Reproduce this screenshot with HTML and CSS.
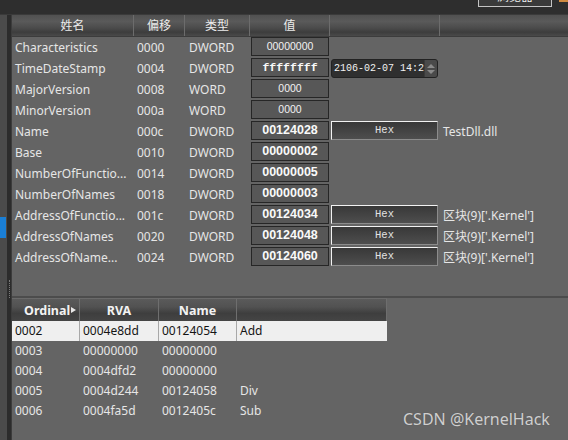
FILE: index.html
```html
<!DOCTYPE html>
<html>
<head>
<meta charset="utf-8">
<link rel="stylesheet" href="styles.css">
</head>
<body>
<div class="app">
  <div class="topbar">
    <div class="tb-btn">浏览器</div>
    <div class="tb-orange"></div>
  </div>
  <div class="main">
    <div class="sidebar">
      <div class="side-light"><div class="side-blue"></div></div>
      <div class="side-dark"><div class="side-grip"></div></div>
    </div>
    <div class="content">
      <div class="upper">
        <div class="urow uhead">
          <div class="hc">姓名</div>
          <div class="hc">偏移</div>
          <div class="hc">类型</div>
          <div class="hc">值</div>
          <div class="hc"></div>
          <div class="hc last"></div>
        </div>
        <div class="urow">
          <div class="c">Characteristics</div><div class="c">0000</div><div class="c">DWORD</div>
          <div class="c"><div class="vbox thin">00000000</div></div><div class="c"></div><div class="c"></div>
        </div>
        <div class="urow">
          <div class="c">TimeDateStamp</div><div class="c">0004</div><div class="c">DWORD</div>
          <div class="c"><div class="vbox mono">ffffffff</div></div>
          <div class="c"><div class="datebox"><span class="date-text">2106-02-07 14:2</span><span class="spin"><i class="up"></i><i class="dn"></i></span></div></div>
          <div class="c"></div>
        </div>
        <div class="urow">
          <div class="c">MajorVersion</div><div class="c">0008</div><div class="c">WORD</div>
          <div class="c"><div class="vbox thin">0000</div></div><div class="c"></div><div class="c"></div>
        </div>
        <div class="urow">
          <div class="c">MinorVersion</div><div class="c">000a</div><div class="c">WORD</div>
          <div class="c"><div class="vbox thin">0000</div></div><div class="c"></div><div class="c"></div>
        </div>
        <div class="urow">
          <div class="c">Name</div><div class="c">000c</div><div class="c">DWORD</div>
          <div class="c"><div class="vbox bold">00124028</div></div>
          <div class="c"><div class="hexbtn">Hex</div></div>
          <div class="c">TestDll.dll</div>
        </div>
        <div class="urow">
          <div class="c">Base</div><div class="c">0010</div><div class="c">DWORD</div>
          <div class="c"><div class="vbox bold">00000002</div></div><div class="c"></div><div class="c"></div>
        </div>
        <div class="urow">
          <div class="c">NumberOfFunctio...</div><div class="c">0014</div><div class="c">DWORD</div>
          <div class="c"><div class="vbox bold">00000005</div></div><div class="c"></div><div class="c"></div>
        </div>
        <div class="urow">
          <div class="c">NumberOfNames</div><div class="c">0018</div><div class="c">DWORD</div>
          <div class="c"><div class="vbox bold">00000003</div></div><div class="c"></div><div class="c"></div>
        </div>
        <div class="urow">
          <div class="c">AddressOfFunctio...</div><div class="c">001c</div><div class="c">DWORD</div>
          <div class="c"><div class="vbox bold">00124034</div></div>
          <div class="c"><div class="hexbtn">Hex</div></div>
          <div class="c">区块(9)['.Kernel']</div>
        </div>
        <div class="urow">
          <div class="c">AddressOfNames</div><div class="c">0020</div><div class="c">DWORD</div>
          <div class="c"><div class="vbox bold">00124048</div></div>
          <div class="c"><div class="hexbtn">Hex</div></div>
          <div class="c">区块(9)['.Kernel']</div>
        </div>
        <div class="urow">
          <div class="c">AddressOfName...</div><div class="c">0024</div><div class="c">DWORD</div>
          <div class="c"><div class="vbox bold">00124060</div></div>
          <div class="c"><div class="hexbtn">Hex</div></div>
          <div class="c">区块(9)['.Kernel']</div>
        </div>
      </div>
      <div class="splitter"></div>
      <div class="lower">
        <div class="lrow lhead">
          <div class="lh"><span>Ordinal</span><i class="sort"></i></div>
          <div class="lh">RVA</div>
          <div class="lh">Name</div>
          <div class="lh"></div>
        </div>
        <div class="lrow sel">
          <div class="lc">0002</div><div class="lc">0004e8dd</div><div class="lc">00124054</div><div class="lc">Add</div>
        </div>
        <div class="lrow">
          <div class="lc">0003</div><div class="lc">00000000</div><div class="lc">00000000</div><div class="lc"></div>
        </div>
        <div class="lrow">
          <div class="lc">0004</div><div class="lc">0004dfd2</div><div class="lc">00000000</div><div class="lc"></div>
        </div>
        <div class="lrow">
          <div class="lc">0005</div><div class="lc">0004d244</div><div class="lc">00124058</div><div class="lc">Div</div>
        </div>
        <div class="lrow">
          <div class="lc">0006</div><div class="lc">0004fa5d</div><div class="lc">0012405c</div><div class="lc">Sub</div>
        </div>
      </div>
    </div>
  </div>
  <div class="watermark">CSDN @KernelHack</div>
</div>
</body>
</html>
```
FILE: styles.css
```css
* { box-sizing: border-box; margin: 0; padding: 0; }
html, body { width: 568px; height: 440px; overflow: hidden; }
body {
  background: #646464;
  font-family: "Noto Sans", "Noto Sans CJK SC", sans-serif;
  font-size: 12px;
  color: #e6e6e6;
}
.app { position: relative; width: 568px; height: 440px; display: flex; flex-direction: column; }

.topbar {
  height: 15px;
  flex: none;
  background: #2e2e2e;
  border-bottom: 1px solid #3a3a3a;
  display: flex;
  justify-content: flex-end;
  align-items: flex-start;
  overflow: hidden;
}
.tb-btn {
  margin-top: -13px;
  margin-right: 7px;
  width: 74px;
  height: 20px;
  border: 1px solid #c4c4c4;
  background: #3a3a3a;
  color: #f0f0f0;
  font-size: 12px;
  line-height: 17px;
  text-align: center;
}
.tb-orange { width: 9px; height: 2px; background: #d08a40; }

.main { flex: 1; display: flex; min-height: 0; }
.sidebar { width: 12px; display: flex; }
.side-light { width: 7px; background: #4b4b4b; }
.side-blue { margin-top: 202px; height: 21px; width: 6px; background: #1a7fd6; }
.side-dark { width: 5px; background: #2c2c2c; border-right: 1px solid #3c3c3c; }
.side-grip { margin-top: 265px; margin-left: 2px; height: 18px; border-left: 1px dotted #7a7a7a; }

.content { flex: 1; display: flex; flex-direction: column; }
.upper { height: 281px; flex: none; }
.urow {
  display: grid;
  grid-template-columns: 122px 51px 65px 80px 110px 1fr;
  height: 21px;
}
.uhead {
  height: 22px;
  background: linear-gradient(to bottom, #505050 0%, #5a5a5a 30%, #4c4c4c 60%, #3d3d3d 82%, #4a4a4a 100%);
  border-bottom: 1px solid #3c3c3c;
}
.hc {
  border-right: 1px solid #6c6c6c;
  text-align: center;
  line-height: 21px;
  color: #ececec;
}
.hc.last { border-right: none; }
.c {
  padding-left: 3px;
  line-height: 21px;
  white-space: nowrap;
  overflow: hidden;
}
.urow .c:nth-child(3) { padding-left: 4px; }
.urow .c:nth-child(4), .urow .c:nth-child(5) { padding-left: 1px; }

.vbox {
  width: 78px;
  height: 19px;
  border: 1px solid #262626;
  background: #575757;
  color: #f2f2f2;
  text-align: center;
  line-height: 17px;
}
.vbox.thin { font-family: "Liberation Sans", sans-serif; font-size: 10.5px; }
.vbox.bold { font-family: "Liberation Sans", sans-serif; font-weight: bold; font-size: 12.5px; color: #fafafa; }
.vbox.mono { font-family: "Liberation Mono", monospace; font-weight: bold; font-size: 11.5px; color: #fafafa; }

.datebox {
  margin-top: 1px;
  width: 107px;
  height: 19px;
  background: #2f2f2f;
  border: 1px solid #222;
  border-radius: 3px;
  display: flex;
  overflow: hidden;
}
.date-text {
  flex: 1;
  white-space: nowrap;
  padding-left: 2px;
  font-family: "Liberation Mono", monospace;
  font-size: 10px;
  line-height: 17px;
  color: #f2f2f2;
}
.spin {
  width: 14px;
  background: #4a4a4a;
  border-left: 1px solid #3a3a3a;
  display: flex;
  flex-direction: column;
  align-items: center;
  justify-content: center;
  gap: 2px;
}
.spin i { width: 0; height: 0; border-left: 4px solid transparent; border-right: 4px solid transparent; }
.spin .up { border-bottom: 4px solid #8a8a8a; }
.spin .dn { border-top: 4px solid #8a8a8a; }

.hexbtn {
  width: 107px;
  height: 19px;
  border-top: 1px solid #f2f2f2;
  border-left: 1px solid #f2f2f2;
  border-bottom: 1px solid #8c8c8c;
  border-right: 1px solid #8c8c8c;
  background: linear-gradient(to bottom, #383838, #4e4e4e);
  font-family: "Liberation Mono", monospace;
  font-size: 10.5px;
  line-height: 17px;
  text-align: center;
  color: #e2e2e2;
}

.splitter { height: 2px; flex: none; background: #4c4c4c; }
.lower { flex: 1; }
.lrow {
  display: grid;
  grid-template-columns: 68px 79px 78px 150px;
  width: 375px;
  height: 20px;
}
.lhead {
  height: 23px;
  border-top: 1px solid #6a6a6a;
  background: linear-gradient(to bottom, #5a5a5a 0%, #525252 35%, #3e3e3e 65%, #454545 100%);
}
.lh {
  border-right: 1px solid #6e6e6e;
  font-weight: bold;
  font-size: 12.5px;
  color: #f2f2f2;
  line-height: 21px;
  display: flex;
  justify-content: center;
  align-items: center;
  gap: 1px;
}
.lh:first-child { justify-content: flex-start; padding-left: 12px; }
.sort {
  width: 0; height: 0;
  border-top: 3px solid transparent;
  border-bottom: 3px solid transparent;
  border-left: 5px solid #e8e8e8;
}
.lc {
  padding-left: 3px;
  line-height: 20px;
  white-space: nowrap;
  overflow: hidden;
}
.lrow.sel { background: #efefef; }
.lrow.sel .lc { color: #151515; border-right: 1px solid #a8a8a8; }
.lrow.sel .lc:last-child { border-right: none; }

.watermark {
  position: absolute;
  left: 403px;
  top: 408px;
  font-size: 16px;
  color: #cfcfcf;
  text-shadow: 0 0 1px #555;
  white-space: nowrap;
}
```
